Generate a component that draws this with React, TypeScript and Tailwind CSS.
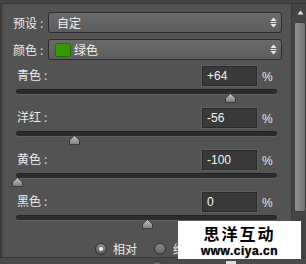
import React from "react";

type Row = { label: string; value: string; pos: number };

const rows: Row[] = [
  { label: "青色", value: "+64", pos: 64 },
  { label: "洋红", value: "-56", pos: -56 },
  { label: "黄色", value: "-100", pos: -100 },
  { label: "黑色", value: "0", pos: 0 },
];

const cjk = "font-['Noto_Sans_CJK_SC','Noto_Sans',sans-serif]";
const latin = "font-['Liberation_Sans',Arial,sans-serif]";

const UpDown = () => (
  <svg width="7" height="11" viewBox="0 0 7 11" className="shrink-0">
    <path d="M3.5 0.5 L6.5 4 L0.5 4 Z" fill="#e8e8e8" />
    <rect x="0.5" y="5" width="6" height="1" fill="#e8e8e8" />
    <path d="M0.5 7 L6.5 7 L3.5 10.5 Z" fill="#e8e8e8" />
  </svg>
);

const Label = ({ text }: { text: string }) => (
  <span className={`${cjk} text-[12px] leading-[16px] text-[#ececec] flex items-center`}>
    {text}
    <span className="ml-[3px] text-[#c9d8e8]">:</span>
  </span>
);

const Thumb = ({ pos }: { pos: number }) => (
  <svg
    width="11"
    height="10"
    viewBox="0 0 11 10"
    className="absolute top-[3px]"
    style={{ left: 131 + pos * 1.3 - 5.5 }}
  >
    <defs>
      <linearGradient id={`tg${pos}`} x1="0" y1="0" x2="0" y2="1">
        <stop offset="0" stopColor="#c4c4c4" />
        <stop offset="1" stopColor="#7c7c7c" />
      </linearGradient>
    </defs>
    <path d="M5.5 0.5 L10.5 5 L10.5 9.5 L0.5 9.5 L0.5 5 Z" fill={`url(#tg${pos})`} stroke="#3a3a3a" strokeWidth="1" />
  </svg>
);

const ColorRow = ({ row, first }: { row: Row; first: boolean }) => (
  <div className={`flex flex-col ${first ? "mt-[6px]" : "mt-[14px]"}`}>
    <div className="flex items-start pl-[14px]">
      <div className="flex-1 pt-[1px]">
        <Label text={row.label} />
      </div>
      <div className="w-[55px] h-[20px] bg-[#393939] border border-[#2a2a2a] shadow-[0_0_0_1px_#5d5d5d] flex items-center pl-[4px]">
        <span className={`${latin} text-[12px] text-[#f2f2f2]`}>{row.value}</span>
      </div>
      <span className={`${latin} w-[34px] pl-[5px] text-[12px] leading-[16px] pt-[3px] text-[#e6e6e6]`}>%</span>
    </div>
    <div className="relative ml-[13px] mt-[3px] w-[261px] h-[5px] rounded-[3px] bg-[#2c2c2c] border-t border-[#232323] shadow-[0_1px_0_#626262]">
      <Thumb pos={row.pos} />
    </div>
  </div>
);

const Radio = ({ on }: { on: boolean }) => (
  <span className="w-[12px] h-[12px] rounded-full border border-[#2e2e2e] bg-[linear-gradient(#8a8a8a,#5e5e5e)] flex items-center justify-center">
    {on && <span className="w-[4px] h-[4px] rounded-full bg-white" />}
  </span>
);

export default function App() {
  return (
    <div className="relative w-[306px] h-[264px] overflow-hidden bg-[#535353] flex flex-col select-none">
      <div className="h-[4px] bg-[#434343] border-b border-[#3a3a3a]" />
      <div className="flex-1 flex">
        <div className="w-[3px] bg-[#3c3c3c] border-r border-[#4a4a4a]" />
        <div className="flex-1 flex flex-col pt-[8px]">
          <div className="flex items-center pl-[10px]">
            <div className="w-[35px]">
              <Label text="预设" />
            </div>
            <div className="w-[234px] h-[21px] rounded-[3px] border border-[#2c2c2c] bg-[linear-gradient(#6a6a6a,#5d5d5d)] flex items-center justify-between pl-[8px] pr-[4px]">
              <span className={`${cjk} text-[12px] text-[#f0f0f0]`}>自定</span>
              <UpDown />
            </div>
          </div>
          <div className="flex items-center pl-[10px] mt-[6px]">
            <div className="w-[35px]">
              <Label text="颜色" />
            </div>
            <div className="w-[234px] h-[21px] rounded-[3px] border border-[#2c2c2c] bg-[linear-gradient(#6a6a6a,#5d5d5d)] flex items-center justify-between pl-[6px] pr-[4px]">
              <div className="flex items-center gap-[3px]">
                <span className="w-[16px] h-[14px] rounded-[2px] bg-[#339900] border border-[#2a6a0a]" />
                <span className={`${cjk} text-[12px] text-[#f0f0f0]`}>绿色</span>
              </div>
              <UpDown />
            </div>
          </div>
          {rows.map((r, i) => (
            <ColorRow key={r.label} row={r} first={i === 0} />
          ))}
          <div className="flex items-center mt-[23px] pl-[92px]">
            <Radio on />
            <span className={`${cjk} ml-[6px] text-[12px] leading-[12px] text-[#ececec]`}>相对</span>
            <span className="ml-[17px]">
              <Radio on={false} />
            </span>
            <span className={`${cjk} ml-[7px] text-[12px] leading-[12px] text-[#ececec]`}>绝对</span>
          </div>
        </div>
        <div className="w-[15px] bg-[#444444] border-l border-[#3a3a3a] flex flex-col items-center pt-[6px]">
          <svg width="7" height="5" viewBox="0 0 7 5" className="ml-[2px]">
            <path d="M3.5 0.5 L6.5 4.5 L0.5 4.5 Z" fill="#e0e0e0" />
          </svg>
          <div className="mt-[7px] ml-[1px] w-[12px] h-[190px] rounded-[2px] bg-[linear-gradient(90deg,#909090,#727272)] border border-[#3c3c3c]" />
        </div>
      </div>
      <div className="h-[7px] bg-[#4a4a4a] border-t border-[#383838] relative">
        <span className="absolute left-[150px] top-[3px] w-[14px] h-[14px] rounded-full border border-[#2e2e2e] bg-[#6a6a6a]" />
        <span className="absolute left-[226px] top-[3px] w-[10px] h-[10px] bg-[#dcdcdc]" />
      </div>

      <div className="absolute left-[178px] top-[221px] w-[123px] h-[38px] bg-white flex flex-col items-center pt-[3px]">
        <span className={`${cjk} font-bold text-[16px] leading-[19px] tracking-[2px] text-black`}>思洋互动</span>
        <span
          className={`${latin} mt-[2px] font-bold text-[12px] leading-[13px] text-black tracking-[0.5px] [text-shadow:0_0_1px_#888,0_0_1px_#888]`}
        >
          www.ciya.cn
        </span>
      </div>
    </div>
  );
}
